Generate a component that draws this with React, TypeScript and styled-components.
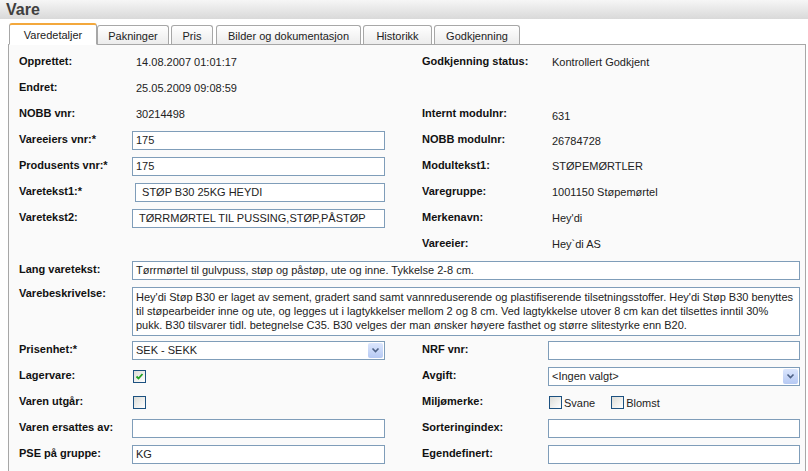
import styled, { createGlobalStyle } from "styled-components";

const GlobalStyle = createGlobalStyle`
  html, body {
    margin: 0;
    padding: 0;
    background: #ffffff;
    font-family: "Liberation Sans", Tahoma, Arial, sans-serif;
    font-size: 11px;
    color: #000;
    overflow: hidden;
  }
`;

const Page = styled.div`
  width: 808px;
  height: 471px;
  overflow: hidden;
`;

const Header = styled.div`
  height: 19px;
  padding-left: 6px;
  display: flex;
  align-items: center;
  background: linear-gradient(#f6f6f6, #d9d9d9);
  font-size: 16px;
  font-weight: bold;
  color: #3f3f3f;
`;

const TabBar = styled.div`
  display: flex;
  align-items: flex-end;
  height: 25px;
  padding-left: 9px;
  position: relative;
  z-index: 1;
`;

const Tab = styled.div<{ $active?: boolean; $w: number; $gap: number }>`
  box-sizing: border-box;
  width: ${(p) => p.$w}px;
  margin-right: ${(p) => p.$gap}px;
  height: ${(p) => (p.$active ? 22 : 19)}px;
  display: flex;
  align-items: center;
  justify-content: center;
  border: 1px solid #a7a7a7;
  border-bottom: ${(p) => (p.$active ? "1px solid #ffffff" : "none")};
  border-top: ${(p) => (p.$active ? "2px solid #f3a83c" : "1px solid #a7a7a7")};
  border-radius: 3px 3px 0 0;
  background: ${(p) =>
    p.$active ? "#ffffff" : "linear-gradient(#ffffff, #ececec)"};
  color: #222;
  font-size: 11px;
  padding-top: ${(p) => (p.$active ? 0 : 1)}px;
  margin-bottom: ${(p) => (p.$active ? -1 : 0)}px;
`;

const Panel = styled.div`
  margin-left: 8px;
  border: 1px solid #a7a7a7;
  border-right: 1px solid #a7a7a7;
  width: 798px;
  height: 440px;
  background: #fafafa;
  padding-top: 4px;
  box-sizing: border-box;
`;

const Row = styled.div<{ $h?: number }>`
  display: grid;
  grid-template-columns: 113px 253px 37px 126px 252px;
  height: ${(p) => p.$h ?? 26}px;
  align-items: center;
  padding-left: 10px;
`;

const Label = styled.div<{ $top?: boolean }>`
  font-weight: bold;
  color: #111;
  align-self: ${(p) => (p.$top ? "start" : "center")};
  padding-top: ${(p) => (p.$top ? 6 : 0)}px;
  margin-top: -2px;
`;

const Value = styled.div<{ $down?: number }>`
  padding-left: 4px;
  color: #222;
  margin-top: ${(p) => p.$down ?? 0}px;
`;

const Spacer = styled.div``;

const Input = styled.div<{ $span?: boolean; $nudge?: number }>`
  box-sizing: border-box;
  height: 19px;
  border: 1px solid #7f9db9;
  background: #ffffff;
  padding-left: 3px;
  display: flex;
  align-items: center;
  color: #222;
  grid-column: ${(p) => (p.$span ? "2 / 6" : "auto")};
  margin-left: ${(p) => p.$nudge ?? 0}px;
  margin-right: ${(p) => (p.$span ? 0 : 0)}px;
  white-space: nowrap;
  overflow: hidden;
`;

const TextArea = styled.div`
  box-sizing: border-box;
  grid-column: 2 / 6;
  align-self: start;
  margin-top: 4px;
  height: 49px;
  border: 1px solid #7f9db9;
  background: #ffffff;
  padding: 2px 3px;
  line-height: 14px;
  color: #222;
  white-space: pre;
  overflow: hidden;
`;

const Select = styled.div`
  box-sizing: border-box;
  height: 19px;
  border: 1px solid #7f9db9;
  background: #ffffff;
  padding-left: 3px;
  padding-right: 1px;
  display: flex;
  align-items: center;
  justify-content: space-between;
  color: #222;
`;

const DropButton = styled.div`
  width: 15px;
  height: 15px;
  border-radius: 2px;
  background: linear-gradient(#dbe6fd, #b6c9f3);
  display: flex;
  align-items: center;
  justify-content: center;
`;

const CheckGroup = styled.div`
  display: flex;
  align-items: center;
  gap: 15px;
  margin-top: 1px;
`;

const CheckItem = styled.label`
  display: flex;
  align-items: center;
  gap: 2px;
  color: #222;
`;

const Box = styled.div`
  box-sizing: border-box;
  width: 13px;
  height: 13px;
  border: 1px solid #1c5180;
  background: linear-gradient(135deg, #dcdcd7, #ffffff);
  display: flex;
  align-items: center;
  justify-content: center;
  margin-left: 1px;
`;

function Checkbox({ checked }: { checked?: boolean }) {
  return (
    <Box>
      {checked && (
        <svg width="9" height="9" viewBox="0 0 9 9">
          <path
            d="M1.5 4.5 L3.5 6.5 L7.5 2"
            stroke="#21a121"
            strokeWidth="1.8"
            fill="none"
          />
        </svg>
      )}
    </Box>
  );
}

function Dropdown({ text }: { text: string }) {
  return (
    <Select>
      {text}
      <DropButton>
        <svg width="9" height="7" viewBox="0 0 9 7">
          <path
            d="M1.5 1.5 L4.5 4.5 L7.5 1.5"
            stroke="#4d6185"
            strokeWidth="1.6"
            fill="none"
          />
        </svg>
      </DropButton>
    </Select>
  );
}

const tabs = [
  { name: "Varedetaljer", w: 88, gap: 0, active: true },
  { name: "Pakninger", w: 72, gap: 2 },
  { name: "Pris", w: 42, gap: 3 },
  { name: "Bilder og dokumentasjon", w: 145, gap: 2 },
  { name: "Historikk", w: 69, gap: 2 },
  { name: "Godkjenning", w: 86, gap: 0 },
];

const description = [
  "Hey'di Støp B30 er laget av sement, gradert sand samt vannreduserende og plastifiserende tilsetningsstoffer. Hey'di Støp B30 benyttes",
  "til støpearbeider inne og ute, og legges ut i lagtykkelser mellom 2 og 8 cm. Ved lagtykkelse utover 8 cm kan det tilsettes inntil 30%",
  "pukk. B30 tilsvarer tidl. betegnelse C35. B30 velges der man ønsker høyere fasthet og større slitestyrke enn B20.",
].join("\n");

export default function App() {
  return (
    <Page>
      <GlobalStyle />
      <Header>Vare</Header>
      <TabBar>
        {tabs.map((t) => (
          <Tab key={t.name} $active={t.active} $w={t.w} $gap={t.gap}>
            {t.name}
          </Tab>
        ))}
      </TabBar>
      <Panel>
        <Row>
          <Label>Opprettet:</Label>
          <Value>14.08.2007 01:01:17</Value>
          <Spacer />
          <Label>Godkjenning status:</Label>
          <Value>Kontrollert Godkjent</Value>
        </Row>
        <Row>
          <Label>Endret:</Label>
          <Value>25.05.2009 09:08:59</Value>
        </Row>
        <Row>
          <Label>NOBB vnr:</Label>
          <Value>30214498</Value>
          <Spacer />
          <Label>Internt modulnr:</Label>
          <Value $down={4}>631</Value>
        </Row>
        <Row>
          <Label>Vareeiers vnr:*</Label>
          <Input>175</Input>
          <Spacer />
          <Label>NOBB modulnr:</Label>
          <Value $down={2}>26784728</Value>
        </Row>
        <Row>
          <Label>Produsents vnr:*</Label>
          <Input>175</Input>
          <Spacer />
          <Label>Modultekst1:</Label>
          <Value>STØPEMØRTLER</Value>
        </Row>
        <Row>
          <Label>Varetekst1:*</Label>
          <Input $nudge={3}>&nbsp;STØP B30 25KG HEYDI</Input>
          <Spacer />
          <Label>Varegruppe:</Label>
          <Value>1001150 Støpemørtel</Value>
        </Row>
        <Row>
          <Label>Varetekst2:</Label>
          <Input>&nbsp;TØRRMØRTEL TIL PUSSING,STØP,PÅSTØP</Input>
          <Spacer />
          <Label>Merkenavn:</Label>
          <Value>Hey'di</Value>
        </Row>
        <Row>
          <Spacer />
          <Spacer />
          <Spacer />
          <Label>Vareeier:</Label>
          <Value>Hey`di AS</Value>
        </Row>
        <Row>
          <Label>Lang varetekst:</Label>
          <Input $span>
            Tørrmørtel til gulvpuss, støp og påstøp, ute og inne. Tykkelse 2-8 cm.
          </Input>
        </Row>
        <Row $h={54}>
          <Label $top>Varebeskrivelse:</Label>
          <TextArea>{description}</TextArea>
        </Row>
        <Row>
          <Label>Prisenhet:*</Label>
          <Dropdown text="SEK - SEKK" />
          <Spacer />
          <Label>NRF vnr:</Label>
          <Input />
        </Row>
        <Row>
          <Label>Lagervare:</Label>
          <Checkbox checked />
          <Spacer />
          <Label>Avgift:</Label>
          <Dropdown text="<Ingen valgt>" />
        </Row>
        <Row>
          <Label>Varen utgår:</Label>
          <Checkbox />
          <Spacer />
          <Label>Miljømerke:</Label>
          <CheckGroup>
            <CheckItem>
              <Checkbox />
              Svane
            </CheckItem>
            <CheckItem>
              <Checkbox />
              Blomst
            </CheckItem>
          </CheckGroup>
        </Row>
        <Row>
          <Label>Varen ersattes av:</Label>
          <Input />
          <Spacer />
          <Label>Sorteringindex:</Label>
          <Input />
        </Row>
        <Row>
          <Label>PSE på gruppe:</Label>
          <Input>KG</Input>
          <Spacer />
          <Label>Egendefinert:</Label>
          <Input />
        </Row>
      </Panel>
    </Page>
  );
}
